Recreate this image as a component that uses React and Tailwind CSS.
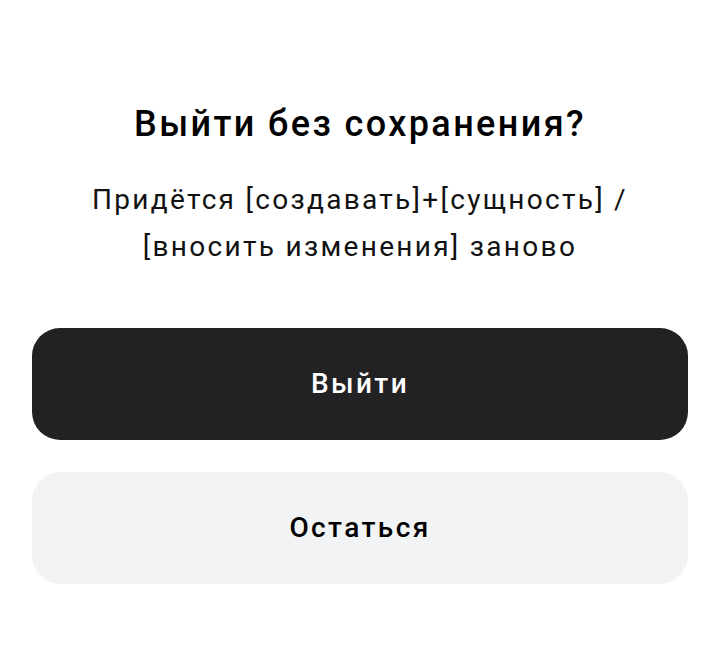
export default function App() {
  return (
    <div className="w-[720px] h-[664px] bg-white px-8 pt-[96px] flex flex-col items-stretch" style={{ fontFamily: 'Roboto, "Noto Sans", sans-serif' }}>
      <h1 className="text-center text-[36px] leading-[56px] font-medium text-black tracking-[2.4px]">Выйти без сохранения?</h1>
      <p className="mt-[24px] text-center text-[28px] leading-[47px] text-[#111] tracking-[2.3px] px-[20px]">
        Придётся [создавать]+[сущность] / [вносить изменения] заново
      </p>
      <button className="mt-[58px] h-[112px] rounded-[28px] bg-[#222224] text-white text-[28px] font-medium tracking-[2.4px]">Выйти</button>
      <button className="mt-[32px] h-[112px] rounded-[28px] bg-[#f2f3f5] text-black text-[28px] font-medium tracking-[2.4px]">Остаться</button>
    </div>
  );
}
